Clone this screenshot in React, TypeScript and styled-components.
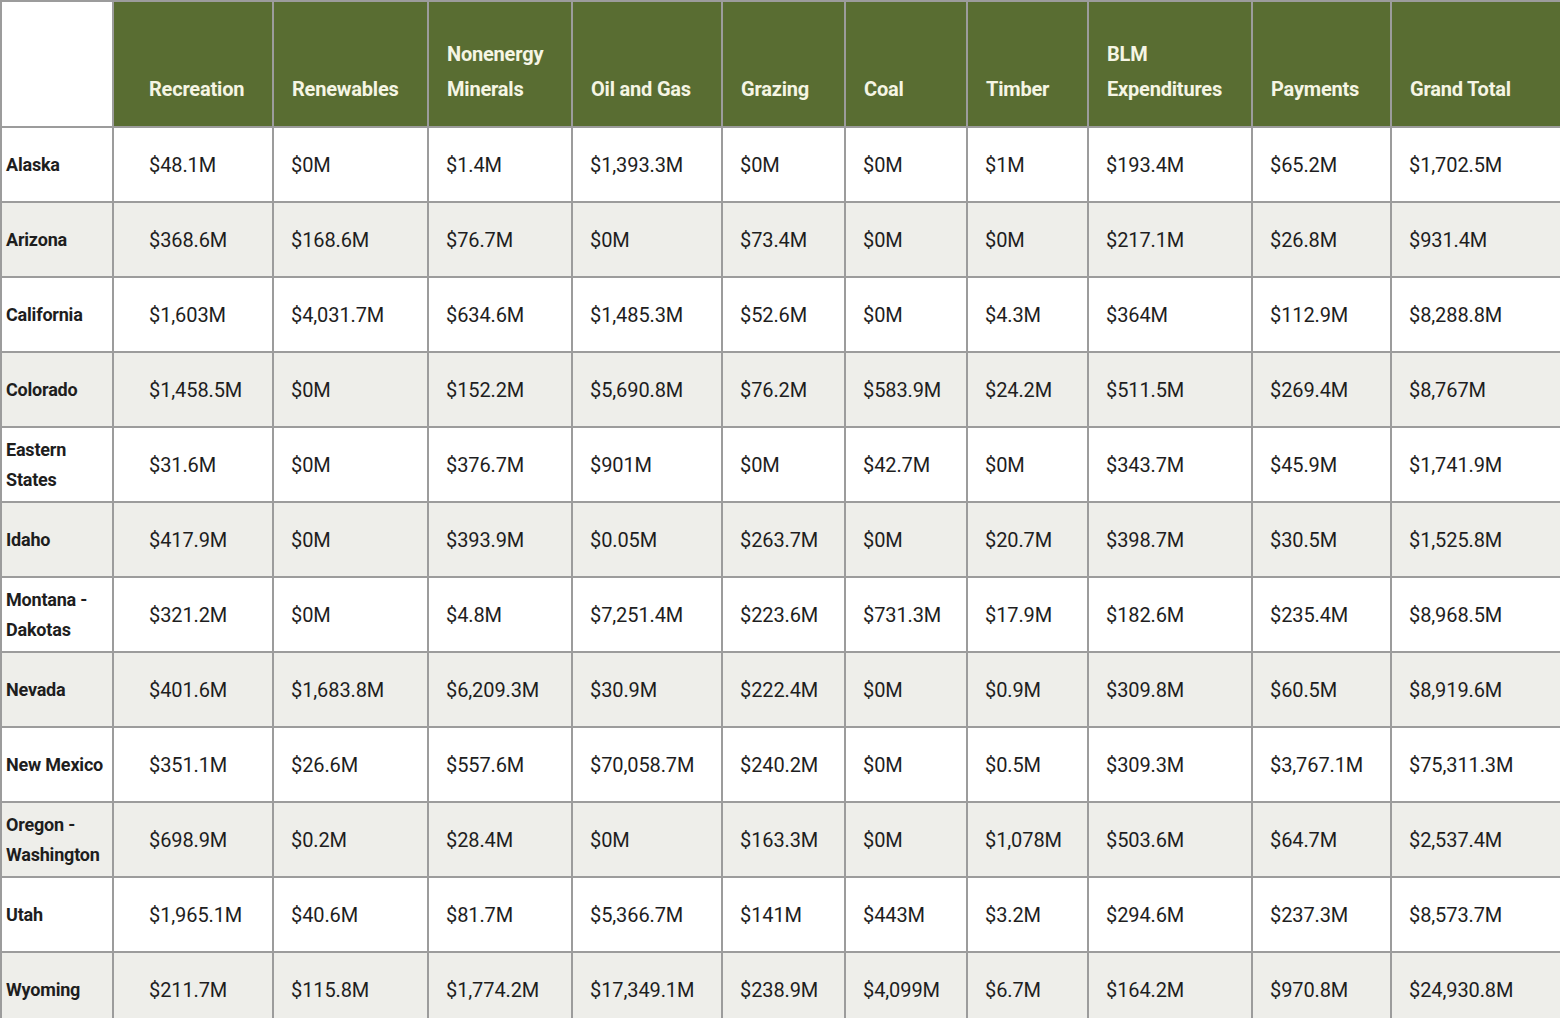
import React from 'react'
import styled, { createGlobalStyle } from 'styled-components'

const Global = createGlobalStyle`
  body { margin: 0; background: #fff; font-family: Roboto, "Liberation Sans", sans-serif; }
`

const Table = styled.table`
  border-collapse: collapse;
  table-layout: fixed;
  width: 1560px;
  color: #1e1e1e;
`

const HeadCell = styled.th<{ $blank?: boolean }>`
  height: 105px;
  background: ${p => (p.$blank ? '#fff' : '#596d32')};
  color: #f5f5e4;
  font-size: 20px;
  font-weight: 700;
  text-align: left;
  vertical-align: bottom;
  line-height: 35px;
  padding: 0 0 19px 18px;
  border: 2px solid #9c9c9c;
  letter-spacing: -0.2px;
`

const Row = styled.tr<{ $alt: boolean }>`
  background: ${p => (p.$alt ? '#eeeeea' : '#fff')};
`

const NameCell = styled.td`
  height: 73px;
  padding: 0 0 0 4px;
  font-size: 18px;
  font-weight: 700;
  line-height: 30px;
  border: 2px solid #9c9c9c;
  letter-spacing: -0.2px;
`

const Cell = styled.td<{ $first?: boolean }>`
  padding: 0 0 0 ${p => (p.$first ? 35 : 17)}px;
  font-size: 20px;
  border: 2px solid #9c9c9c;
  white-space: nowrap;
  letter-spacing: -0.1px;
`

const widths = [112, 160, 155, 144, 150, 123, 122, 121, 164, 139, 170]
const heads = ['', 'Recreation', 'Renewables', 'Nonenergy Minerals', 'Oil and Gas', 'Grazing', 'Coal', 'Timber', 'BLM Expenditures', 'Payments', 'Grand Total']

const rows: [string, string[]][] = [
  ['Alaska', ['$48.1M', '$0M', '$1.4M', '$1,393.3M', '$0M', '$0M', '$1M', '$193.4M', '$65.2M', '$1,702.5M']],
  ['Arizona', ['$368.6M', '$168.6M', '$76.7M', '$0M', '$73.4M', '$0M', '$0M', '$217.1M', '$26.8M', '$931.4M']],
  ['California', ['$1,603M', '$4,031.7M', '$634.6M', '$1,485.3M', '$52.6M', '$0M', '$4.3M', '$364M', '$112.9M', '$8,288.8M']],
  ['Colorado', ['$1,458.5M', '$0M', '$152.2M', '$5,690.8M', '$76.2M', '$583.9M', '$24.2M', '$511.5M', '$269.4M', '$8,767M']],
  ['Eastern States', ['$31.6M', '$0M', '$376.7M', '$901M', '$0M', '$42.7M', '$0M', '$343.7M', '$45.9M', '$1,741.9M']],
  ['Idaho', ['$417.9M', '$0M', '$393.9M', '$0.05M', '$263.7M', '$0M', '$20.7M', '$398.7M', '$30.5M', '$1,525.8M']],
  ['Montana - Dakotas', ['$321.2M', '$0M', '$4.8M', '$7,251.4M', '$223.6M', '$731.3M', '$17.9M', '$182.6M', '$235.4M', '$8,968.5M']],
  ['Nevada', ['$401.6M', '$1,683.8M', '$6,209.3M', '$30.9M', '$222.4M', '$0M', '$0.9M', '$309.8M', '$60.5M', '$8,919.6M']],
  ['New Mexico', ['$351.1M', '$26.6M', '$557.6M', '$70,058.7M', '$240.2M', '$0M', '$0.5M', '$309.3M', '$3,767.1M', '$75,311.3M']],
  ['Oregon - Washington', ['$698.9M', '$0.2M', '$28.4M', '$0M', '$163.3M', '$0M', '$1,078M', '$503.6M', '$64.7M', '$2,537.4M']],
  ['Utah', ['$1,965.1M', '$40.6M', '$81.7M', '$5,366.7M', '$141M', '$443M', '$3.2M', '$294.6M', '$237.3M', '$8,573.7M']],
  ['Wyoming', ['$211.7M', '$115.8M', '$1,774.2M', '$17,349.1M', '$238.9M', '$4,099M', '$6.7M', '$164.2M', '$970.8M', '$24,930.8M']],
]

export default function App() {
  return (
    <>
      <Global />
      <Table>
        <colgroup>
          {widths.map((w, i) => <col key={i} style={{ width: w }} />)}
        </colgroup>
        <thead>
          <tr>
            {heads.map((h, i) => (
              <HeadCell key={i} $blank={i === 0} style={i === 1 ? { paddingLeft: 35 } : undefined}>{h}</HeadCell>
            ))}
          </tr>
        </thead>
        <tbody>
          {rows.map(([name, vals], r) => (
            <Row key={name} $alt={r % 2 === 1}>
              <NameCell>{name}</NameCell>
              {vals.map((v, i) => <Cell key={i} $first={i === 0}>{v}</Cell>)}
            </Row>
          ))}
        </tbody>
      </Table>
    </>
  )
}
